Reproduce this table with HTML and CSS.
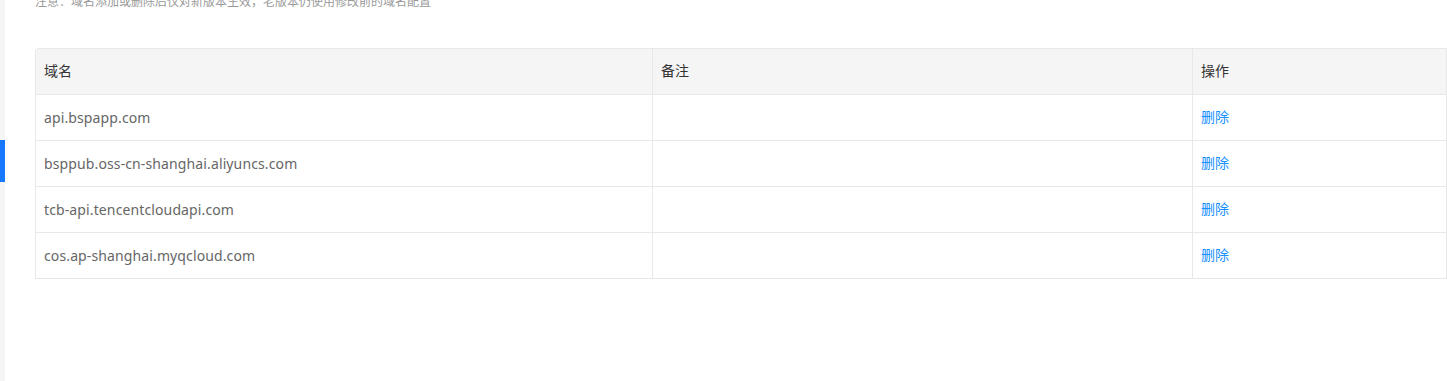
FILE: index.html
```html
<!DOCTYPE html>
<html lang="zh-CN">
<head>
<meta charset="utf-8">
<title>域名配置</title>
<link rel="stylesheet" href="styles.css">
</head>
<body>
<div class="layout">
  <aside class="sidebar">
    <div class="indicator"></div>
  </aside>
  <main class="main">
    <p class="note">注意：域名添加或删除后仅对新版本生效，老版本仍使用修改前的域名配置</p>
    <table class="domains">
      <colgroup>
        <col class="c-domain">
        <col class="c-remark">
        <col class="c-op">
      </colgroup>
      <thead>
        <tr><th>域名</th><th>备注</th><th>操作</th></tr>
      </thead>
      <tbody>
        <tr><td class="domain">api.bspapp.com</td><td></td><td class="op"><a class="link" href="#">删除</a></td></tr>
        <tr><td class="domain">bsppub.oss-cn-shanghai.aliyuncs.com</td><td></td><td class="op"><a class="link" href="#">删除</a></td></tr>
        <tr><td class="domain">tcb-api.tencentcloudapi.com</td><td></td><td class="op"><a class="link" href="#">删除</a></td></tr>
        <tr><td class="domain">cos.ap-shanghai.myqcloud.com</td><td></td><td class="op"><a class="link" href="#">删除</a></td></tr>
      </tbody>
    </table>
  </main>
</div>
</body>
</html>
```

FILE: styles.css
```css
html, body {
  margin: 0;
  padding: 0;
  background: #fff;
  overflow: hidden;
}
body {
  font-family: "Noto Sans", "Noto Sans CJK SC", sans-serif;
  font-size: 14px;
  color: #666;
}
.layout {
  display: flex;
  height: 381px;
}
.sidebar {
  width: 5px;
  flex: none;
  background: #f5f5f5;
  padding-top: 140px;
  box-sizing: border-box;
}
.indicator {
  height: 42px;
  background: #1677ff;
}
.main {
  flex: 1;
  padding-left: 30px;
  min-width: 0;
}
.note {
  margin: -6px 0 0;
  font-size: 12px;
  line-height: 16px;
  color: #999;
  white-space: nowrap;
}
.domains {
  margin-top: 38px;
  width: 1412px;
  table-layout: fixed;
  border-collapse: separate;
  border-spacing: 0;
  border-top: 1px solid #e8e8e8;
  border-left: 1px solid #e8e8e8;
  border-top-left-radius: 4px;
}
.c-domain { width: 617px; }
.c-remark { width: 540px; }
.domains th,
.domains td {
  padding: 13px 8px 12px;
  line-height: 20px;
  text-align: left;
  border-right: 1px solid #e8e8e8;
  border-bottom: 1px solid #e8e8e8;
  white-space: nowrap;
  font-size: 14px;
}
.domains th {
  background: #f5f5f5;
  font-weight: normal;
  color: #333;
  padding-top: 12px;
  padding-bottom: 13px;
}
.domains th:first-child {
  border-top-left-radius: 4px;
}
.domains td {
  color: #666;
}
.domains td.domain {
  letter-spacing: 0.12px;
}
.domains td.op {
  padding-top: 12px;
  padding-bottom: 13px;
}
.link {
  color: #1890ff;
  text-decoration: none;
}
```
